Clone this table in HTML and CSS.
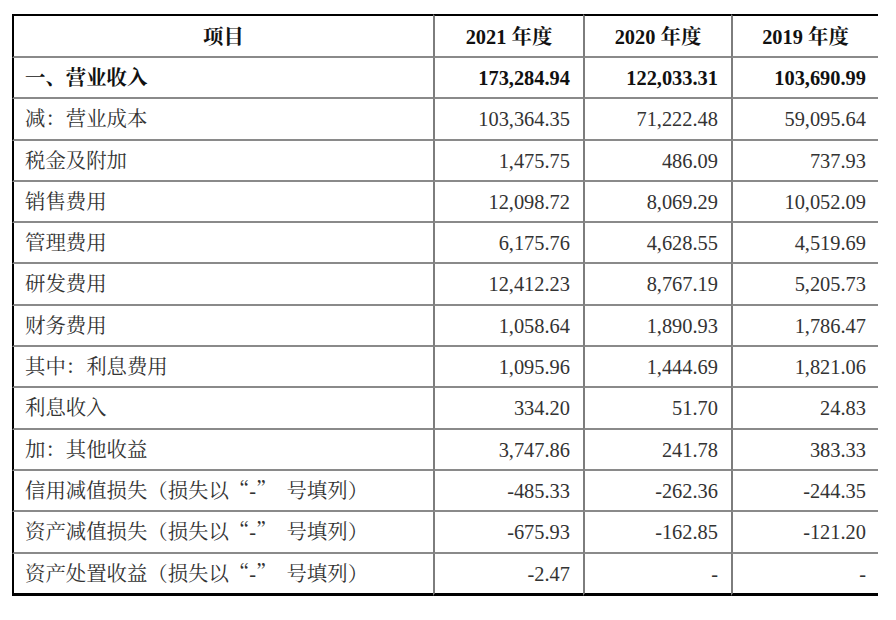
FILE: index.html
```html
<!DOCTYPE html>
<html lang="zh-CN">
<head>
<meta charset="utf-8">
<title>利润表</title>
<link rel="stylesheet" href="styles.css">
</head>
<body>
<div class="page">
<table class="fin">
  <colgroup>
    <col class="c-item"><col class="c-y1"><col class="c-y2"><col class="c-y3">
  </colgroup>
  <thead>
    <tr><th>项目</th><th>2021 年度</th><th>2020 年度</th><th>2019 年度</th></tr>
  </thead>
  <tbody>
    <tr class="strong"><td>一、营业收入</td><td>173,284.94</td><td>122,033.31</td><td>103,690.99</td></tr>
    <tr><td>减：营业成本</td><td>103,364.35</td><td>71,222.48</td><td>59,095.64</td></tr>
    <tr><td>税金及附加</td><td>1,475.75</td><td>486.09</td><td>737.93</td></tr>
    <tr><td>销售费用</td><td>12,098.72</td><td>8,069.29</td><td>10,052.09</td></tr>
    <tr><td>管理费用</td><td>6,175.76</td><td>4,628.55</td><td>4,519.69</td></tr>
    <tr><td>研发费用</td><td>12,412.23</td><td>8,767.19</td><td>5,205.73</td></tr>
    <tr><td>财务费用</td><td>1,058.64</td><td>1,890.93</td><td>1,786.47</td></tr>
    <tr><td>其中：利息费用</td><td>1,095.96</td><td>1,444.69</td><td>1,821.06</td></tr>
    <tr><td>利息收入</td><td>334.20</td><td>51.70</td><td>24.83</td></tr>
    <tr><td>加：其他收益</td><td>3,747.86</td><td>241.78</td><td>383.33</td></tr>
    <tr><td>信用减值损失（损失以<span class="q">“</span>-<span class="q qe">”</span>号填列）</td><td>-485.33</td><td>-262.36</td><td>-244.35</td></tr>
    <tr><td>资产减值损失（损失以<span class="q">“</span>-<span class="q qe">”</span>号填列）</td><td>-675.93</td><td>-162.85</td><td>-121.20</td></tr>
    <tr class="last"><td>资产处置收益（损失以<span class="q">“</span>-<span class="q qe">”</span>号填列）</td><td>-2.47</td><td>-</td><td>-</td></tr>
  </tbody>
</table>
</div>
</body>
</html>
```
FILE: styles.css
```css
html, body {
  margin: 0;
  padding: 0;
  background: #ffffff;
}
.page {
  padding: 14px 0 0 12px;
}
.fin {
  border-collapse: separate;
  border-spacing: 0;
  table-layout: fixed;
  width: 866px;
  font-family: "Liberation Serif", "Noto Serif CJK SC", "Noto Sans CJK SC", serif;
  font-size: 20.4px;
  color: #333333;
}
.c-item { width: 421px; }
.c-y1 { width: 150px; }
.c-y2 { width: 148px; }
.c-y3 { width: 147px; }

.fin th, .fin td {
  padding: 0;
  border-left: 2px solid #7d7d7d;
  border-bottom: 2px solid #8a8a8a;
  white-space: nowrap;
  overflow: hidden;
}
.fin th:first-child, .fin td:first-child {
  border-left: 2px solid #000000;
}
.fin th {
  border-top: 2px solid #000000;
  height: 37px;
  line-height: 37px;
  padding-top: 3px;
  font-weight: bold;
  color: #111111;
  text-align: center;
}
.fin td {
  height: 37.3px;
  line-height: 37.3px;
  padding-top: 2px;
  text-align: right;
  padding-right: 13px;
}
.fin td:first-child {
  text-align: left;
  padding-left: 11px;
  padding-right: 0;
}
.fin td:last-child {
  padding-right: 12px;
}
.fin tr.strong td {
  font-weight: bold;
  color: #111111;
}
.fin tr.last td {
  border-bottom: 3px solid #000000;
}
.q {
  font-family: "Noto Serif CJK SC", "Noto Sans CJK SC", sans-serif;
  line-height: 0;
}
.qe {
  margin-right: 10px;
}
```
